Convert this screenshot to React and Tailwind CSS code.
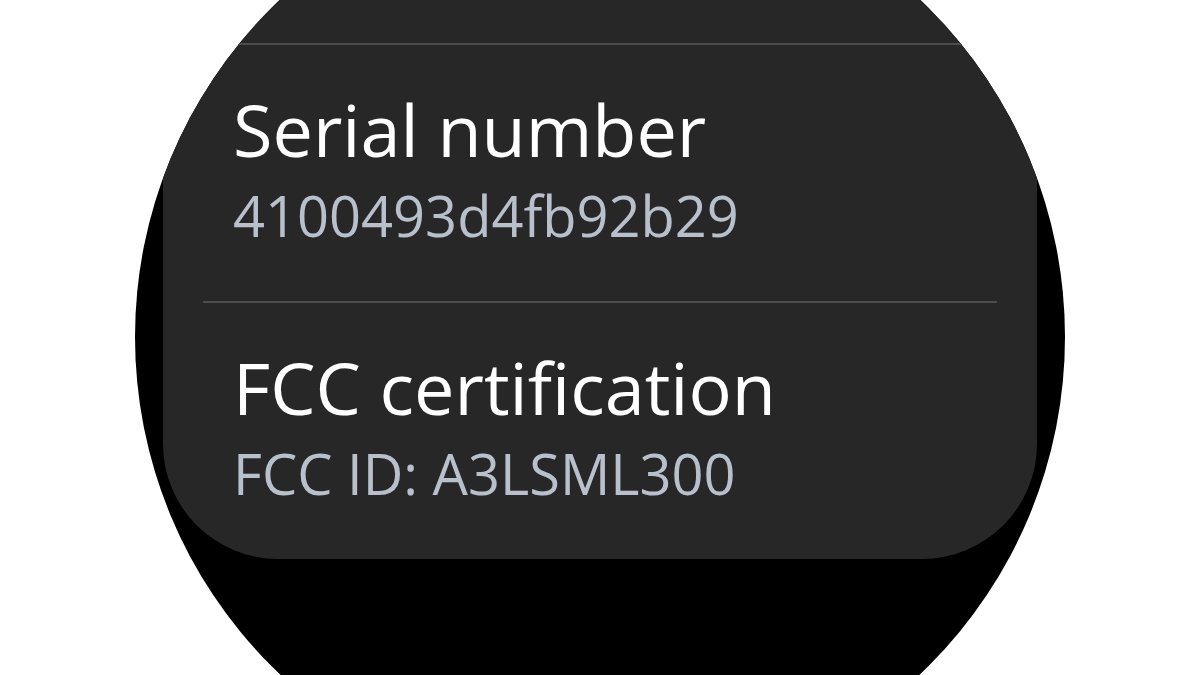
import React from 'react';

const items = [
  { title: 'Serial number', value: '4100493d4fb92b29' },
  { title: 'FCC certification', value: 'FCC ID: A3LSML300' },
];

function InfoRow({ title, value }) {
  return (
    <div className="px-[70px] pt-[44px] pb-[54px]">
      <div className="text-[72px] leading-[80px] font-medium text-white whitespace-nowrap">{title}</div>
      <div className="mt-[14px] text-[56px] leading-[64px] text-[#b8c0cc] whitespace-nowrap">{value}</div>
    </div>
  );
}

export default function App() {
  return (
    <div
      className="w-[1200px] h-[675px] bg-white overflow-hidden flex justify-center"
      style={{ fontFamily: '"Open Sans", "Noto Sans", sans-serif' }}
    >
      {/* watch face */}
      <div className="w-[930px] h-[930px] shrink-0 -mt-[128px] rounded-full bg-black overflow-hidden">
        <div className="mx-[28px] pt-[171px] bg-[#272727] rounded-b-[115px]">
          {items.map((item) => (
            <div key={item.title}>
              <div className="mx-[40px] h-[2px] bg-[#4d4d4d]" />
              <InfoRow {...item} />
            </div>
          ))}
        </div>
      </div>
    </div>
  );
}
